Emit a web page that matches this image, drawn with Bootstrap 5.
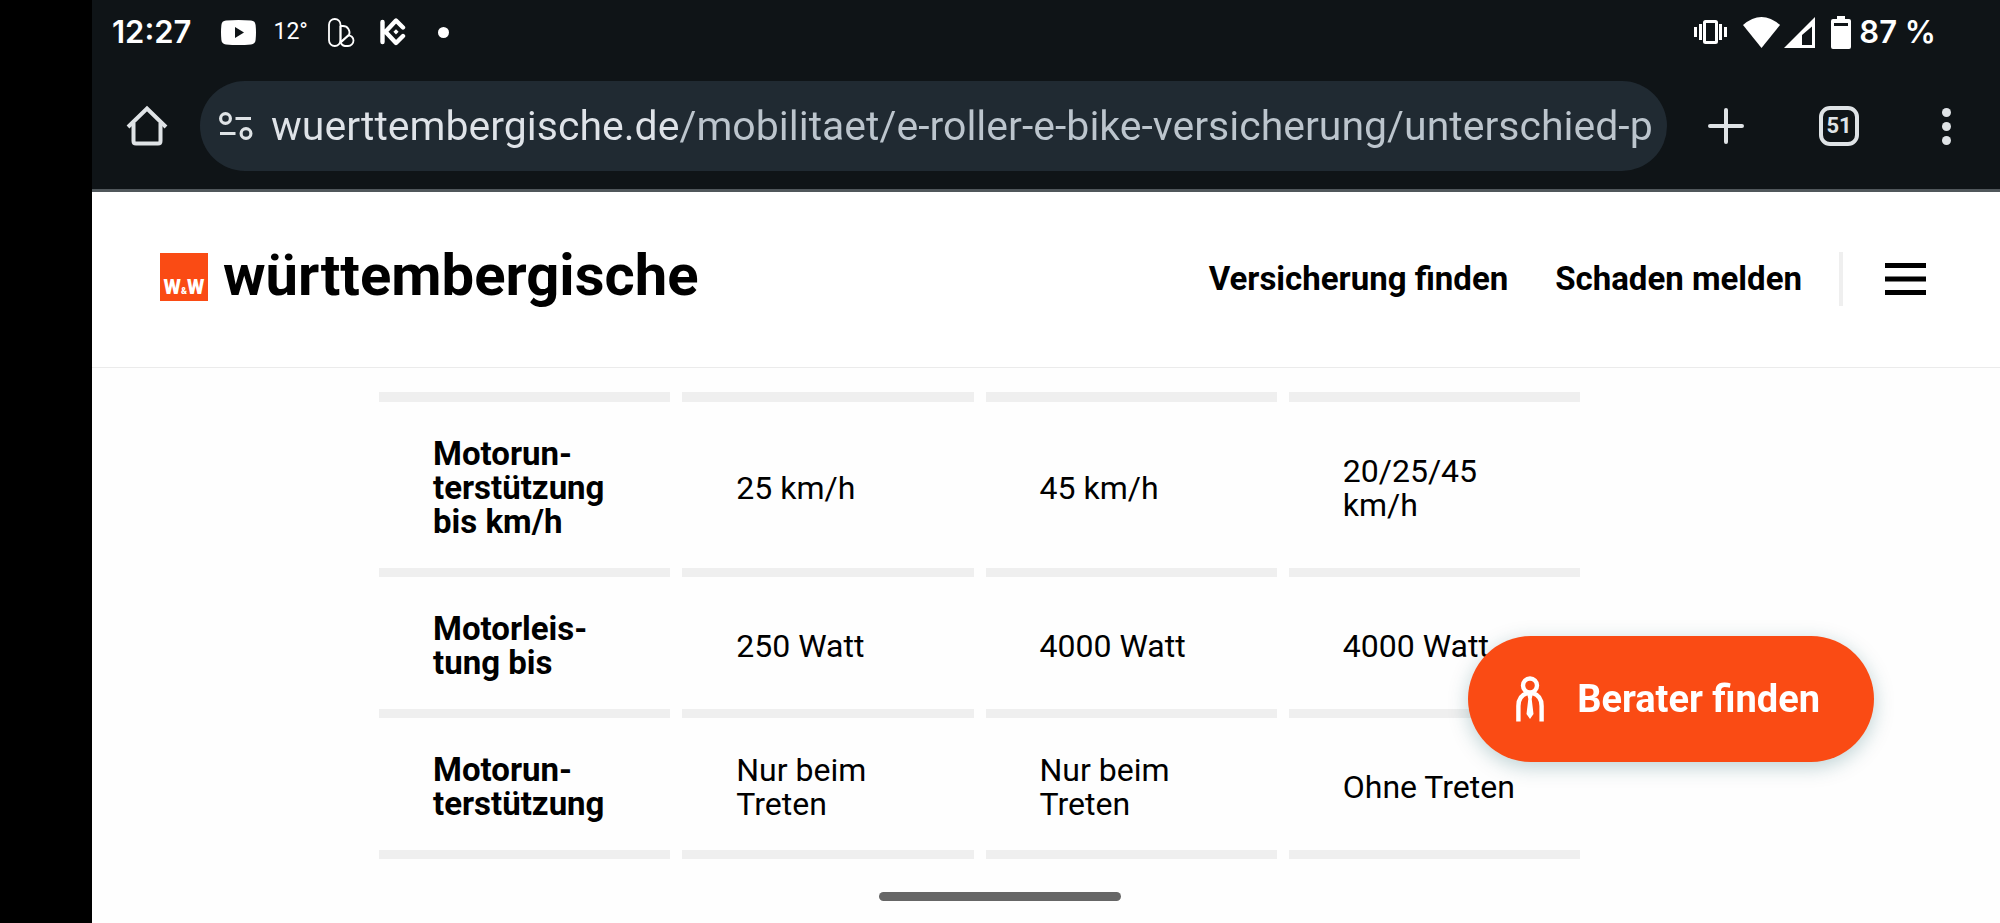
<!DOCTYPE html>
<html lang="de">
<head>
<meta charset="utf-8">
<meta name="viewport" content="width=device-width, initial-scale=1">
<title>Württembergische – E-Roller und E-Bike Versicherung</title>
<link href="https://cdn.jsdelivr.net/npm/bootstrap@5.3.0/dist/css/bootstrap.min.css" rel="stylesheet">
<style>
  body { background: #000; color: #000; font-family: Roboto, "Liberation Sans", sans-serif; }
  svg { display: block; flex: none; }
  .screen { min-height: 100vh; padding-left: 92px; }
  .chrome { background: #0f1417; color: #dfe3e6; border-bottom: 3px solid #50575b; }

  .status { height: 64px; padding: 0 64px 0 20px; color: #fff; font-family: Inter, Roboto, sans-serif; font-size: 31px; font-weight: 600; line-height: 40px; }
  .notices { gap: 17px; margin-left: 30px; }
  .temp { width: 38px; font-family: Roboto, sans-serif; font-size: 23px; font-weight: 400; }

  .toolbar { padding: 17px 49px 18px 34px; }
  .omnibox { height: 90px; margin: 0 41px 0 32px; padding: 0 13px 0 19px; gap: 18px; border-radius: 45px; background: #202a32; min-width: 0; }
  .address { min-width: 0; padding: 0; border: 0; outline: 0; font-size: 41px; line-height: 60px; color: #bcc5cd;
    background: linear-gradient(90deg, #dfe3e8 408px, #bcc5cd 408px); -webkit-background-clip: text; background-clip: text; -webkit-text-fill-color: transparent; }
  .plain { padding: 0; border: 0; background: none; color: inherit; }
  .tabs-btn { width: 40px; height: 40px; margin: 0 83px 0 75px; border: 4px solid #dfe3e6; border-radius: 11px; font: 700 22px/32px Roboto, sans-serif; }

  .site { background: #fefefe; }
  .site-header { padding: 60px 74px 61px 68px; border-bottom: 1px solid #ebebeb; background: #fff; }
  .brand { gap: 15px; color: #000; }
  .brand-name { font-size: 58px; font-weight: 700; line-height: 46px; padding-bottom: 4px; }
  .site-nav { gap: 47px; }
  .site-link { font-size: 33px; font-weight: 700; line-height: 50px; color: #000; }
  .menu-group { gap: 42px; margin-left: -10px; }
  .rule { width: 4px; height: 54px; background: #efefef; }

  .content { padding: 24px 408px 0 275px; }
  .compare { width: 100%; table-layout: fixed; border-collapse: separate; border-spacing: 12px 0; font-size: 32px; line-height: 34px; color: #000; }
  .compare th, .compare td { padding: 35px 53px 29px 54px; border: 0 solid #efefef; border-bottom-width: 9px; vertical-align: middle; }
  .compare th { font-size: 33px; font-weight: 700; }
  .compare td { font-weight: 400; }
  .compare tr:first-child > * { border-top-width: 10px; }

  .advisor { right: 126px; bottom: 161px; height: 126px; padding: 0 54px 0 48px; gap: 33px; border: 0; border-radius: 63px; background: #fa4b14; color: #fff; font-size: 38px; font-weight: 700; box-shadow: 0 5px 20px rgba(0, 80, 90, .26); }
  .gesture { left: 50%; bottom: 22px; width: 242px; height: 9px; margin-left: -121px; border-radius: 5px; background: #666; }
</style>
</head>
<body>
<div class="screen d-flex flex-column">
  <div class="chrome">
    <div class="status d-flex align-items-center">
      <span>12:27</span>
      <div class="notices d-flex align-items-center">
        <svg width="35" height="25" viewBox="0 0 35 25"><path fill="#fff" fill-rule="evenodd" d="M5 .6Q17.500-.6 30 .6 34.300 1 34.600 5 35.400 12.500 34.600 20 34.300 24 30 24.400 17.500 25.600 5 24.400.7 24 .4 20-.4 12.500.4 5 .7 1 5 .6ZM14 7v11l9-5.500z"/></svg>
        <span class="temp">12°</span>
        <svg width="35" height="29" viewBox="0 0 35 29" fill="none" stroke="#fff" stroke-width="1.800"><rect x="1" y="1" width="11.500" height="27" rx="5.700"/><path d="M12.500 8h2.500a6.500 6.500 0 0 1 6 9L13 24"/><path d="M12 25 20 17.500a5 5 0 0 1 5.500 5A5.500 5.500 0 0 1 20 28h-3a5.500 5.500 0 0 1-4.500-4.500V8"/></svg>
        <svg width="41" height="28" viewBox="0 0 41 28" fill="none" stroke="#fff" stroke-width="4.400" stroke-linecap="round" stroke-linejoin="round"><path d="M2.500 4v20M4 14h2M23 9.500l-7-7L5.500 13.800 16 25l7-7"/><path d="M16 11.200l2.600 2.600L16 16.400l-2.600-2.600z" fill="#fff" stroke="none"/></svg>
        <svg width="11" height="11" viewBox="0 0 11 11"><circle cx="5.500" cy="5.500" r="5.500" fill="#fff"/></svg>
      </div>
      <div class="d-flex align-items-center ms-auto">
        <svg class="me-3" width="33" height="24" viewBox="0 0 33 24" fill="#fff"><path d="M0 7h3v10H0zM5 4h3v16H5zM25 4h3v16h-3zM30 7h3v10h-3z"/><rect x="10.500" y="1.500" width="12" height="21" rx="1" fill="none" stroke="#fff" stroke-width="3"/></svg>
        <svg class="me-1" width="37" height="31" viewBox="0 0 37 31"><path fill="#fff" d="M0 8Q18.500-8 37 8L18.500 31z"/></svg>
        <svg class="me-3" width="31" height="31" viewBox="0 0 31 31"><path fill="#fff" fill-rule="evenodd" d="M31 0v31H0zM28 9.500 18 18v10h10z"/></svg>
        <svg class="me-2" width="20" height="33" viewBox="0 0 20 33"><path fill="#fff" fill-rule="evenodd" d="M6 0h8v3h4q2 0 2 2v26q0 2-2 2H2q-2 0-2-2V5q0-2 2-2h4zM3 7v3h14V7z"/></svg>
        <span>87 %</span>
      </div>
    </div>
    <div class="toolbar d-flex align-items-center">
      <button class="plain" aria-label="Startseite"><svg width="42" height="42" viewBox="0 0 42 42" fill="none" stroke="#dfe3e6" stroke-width="4"><path d="M2 22 21 3.500 40 22"/><path d="M7.500 18v18q0 2.500 2.500 2.500h22q2.500 0 2.500-2.500V18"/></svg></button>
      <div class="omnibox d-flex align-items-center flex-grow-1">
        <svg width="34" height="28" viewBox="0 0 34 28" fill="none" stroke="#dfe3e6" stroke-width="3.200"><circle cx="6.500" cy="6.500" r="4.900"/><circle cx="27" cy="21.500" r="4.900"/><path d="M16.500 6.500H32M1 21.500h15.500"/></svg>
        <input class="address flex-grow-1" type="text" aria-label="Adresse" value="wuerttembergische.de/mobilitaet/e-roller-e-bike-versicherung/unterschied-p">
      </div>
      <button class="plain" aria-label="Neuer Tab"><svg width="36" height="36" viewBox="0 0 36 36" stroke="#dfe3e6" stroke-width="4" stroke-linecap="round"><path d="M18 2v32M2 18h32"/></svg></button>
      <button class="plain tabs-btn text-center">51</button>
      <button class="plain" aria-label="Menü"><svg width="9" height="37" viewBox="0 0 9 37" fill="#dfe3e6"><circle cx="4.500" cy="4.500" r="4.500"/><circle cx="4.500" cy="18.500" r="4.500"/><circle cx="4.500" cy="32.500" r="4.500"/></svg></button>
    </div>
  </div>

  <div class="site flex-grow-1">
    <header class="site-header d-flex align-items-center">
      <a class="brand d-flex align-items-center text-decoration-none mb-1" href="#">
        <svg width="48" height="48" viewBox="0 0 48 48" font-family="Roboto, sans-serif" font-weight="900"><path fill="#fa4b14" d="M0 0h48v48H0z"/><text x="24" y="41" text-anchor="middle" fill="#fff" font-size="20">W<tspan font-size="9">&amp;</tspan>W</text></svg>
        <span class="brand-name">württembergische</span>
      </a>
      <nav class="site-nav d-flex align-items-center ms-auto">
        <a class="site-link text-decoration-none" href="#">Versicherung finden</a>
        <a class="site-link text-decoration-none" href="#">Schaden melden</a>
        <div class="menu-group d-flex align-items-center">
          <span class="rule"></span>
          <button class="plain" aria-label="Navigation"><svg width="41" height="32" viewBox="0 0 41 32"><path d="M0 0h41v5H0zM0 13.500h41v5H0zM0 27h41v5H0z"/></svg></button>
        </div>
      </nav>
    </header>

    <main class="content">
      <table class="compare">
        <tbody>
          <tr><th scope="row">Motorun&shy;terstützung bis km/h</th><td>25 km/h</td><td>45 km/h</td><td>20/25/45 km/h</td></tr>
          <tr><th scope="row">Motorleis&shy;tung bis</th><td>250 Watt</td><td>4000 Watt</td><td>4000 Watt</td></tr>
          <tr><th scope="row">Motorun&shy;terstützung</th><td>Nur beim Treten</td><td>Nur beim Treten</td><td>Ohne Treten</td></tr>
        </tbody>
      </table>
    </main>
  </div>
</div>

<button class="advisor position-fixed d-flex align-items-center">
  <svg width="28" height="46" viewBox="0 0 28 46" fill="none" stroke="#fff" stroke-width="4.400"><circle cx="14" cy="9.500" r="7"/><path d="M2.400 45.500V30q0-10 8.600-12.800h6Q25.600 20 25.600 30v15.500"/><path fill="#fff" stroke="none" d="M11 17h6l-1.300 6L17.500 38 14 43l-3.500-5 1.800-15z"/></svg>
  <span>Berater finden</span>
</button>
<div class="gesture position-fixed"></div>
<script src="https://cdn.jsdelivr.net/npm/bootstrap@5.3.0/dist/js/bootstrap.bundle.min.js"></script>
</body>
</html>
